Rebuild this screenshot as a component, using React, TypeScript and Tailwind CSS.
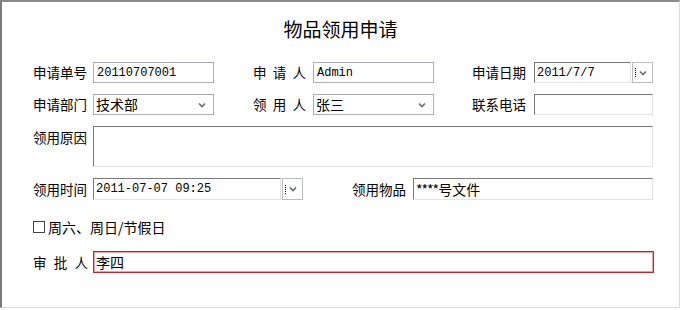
import React from "react";

const cjk = "font-['Noto_Sans_CJK_SC',sans-serif]";
const mono = "font-['Liberation_Mono','Noto_Sans_CJK_SC',monospace]";

const flat = "border border-[#a9adb3] bg-white";
const inset =
  "border border-t-[#7a7a7a] border-l-[#7a7a7a] border-r-[#e3e3e3] border-b-[#e3e3e3] bg-white";

const Chevron = () => (
  <svg width="8" height="6" viewBox="0 0 8 6" className="shrink-0">
    <polyline
      points="1,1.5 4,4.5 7,1.5"
      fill="none"
      stroke="#6b6b6b"
      strokeWidth="1.6"
    />
  </svg>
);

const Label = ({ text, spread = false, w = "w-[55px]" }: { text: string; spread?: boolean; w?: string }) => (
  <div
    className={`${w} shrink-0 whitespace-nowrap text-[13.5px] leading-[21px] text-black ${cjk} ${spread ? "flex justify-between" : ""}`}
  >
    {spread ? text.split("").map((c, i) => <span key={i}>{c}</span>) : text}
  </div>
);

const Select = ({ value, w }: { value: string; w: string }) => (
  <div className={`${w} h-[21px] ${flat} flex items-center justify-between pl-[2px] pr-[7px]`}>
    <span className={`text-[14px] leading-[19px] text-black ${cjk}`}>{value}</span>
    <Chevron />
  </div>
);

const DropButton = () => (
  <div className={`ml-[1px] w-[21px] h-full ${flat} border-[#b9bdc2] flex items-center gap-[3px] pl-[2px]`}>
    <div className="w-[1px] h-[9px] border-l border-dotted border-black" />
    <Chevron />
  </div>
);

export default function App() {
  return (
    <div className="w-[682px] h-[310px] bg-white">
      <div className="w-[680px] h-[308px] border-t-2 border-l-2 border-t-[#8a8a8a] border-l-[#7a7a7a] border-r border-b border-r-[#dadada] border-b-[#dadada] bg-white">
        <div className="h-[60px] pt-[15px] text-center">
          <span className={`text-[19px] leading-[24px] text-black ${cjk}`}>物品领用申请</span>
        </div>

        <div className="pl-[31px] flex flex-col">
          {/* row 1 */}
          <div className="flex items-center h-[21px]">
            <Label text="申请单号" />
            <div className={`ml-[5px] w-[121px] h-[21px] ${flat} pl-[3px] flex items-center`}>
              <span className={`text-[12px] text-black ${mono}`}>20110707001</span>
            </div>
            <div className="ml-[39px]">
              <Label text="申请人" spread w="w-[53px]" />
            </div>
            <div className={`ml-[7px] w-[121px] h-[21px] ${flat} pl-[3px] flex items-center`}>
              <span className={`text-[12px] text-black ${mono}`}>Admin</span>
            </div>
            <div className="ml-[38px]">
              <Label text="申请日期" />
            </div>
            <div className="ml-[7px] flex h-[21px]">
              <div className={`w-[97px] h-full ${inset} pl-[2px] flex items-center`}>
                <span className={`text-[12px] text-black ${mono}`}>2011/7/7</span>
              </div>
              <DropButton />
            </div>
          </div>

          {/* row 2 */}
          <div className="mt-[11px] flex items-center h-[21px]">
            <Label text="申请部门" />
            <div className="ml-[5px]">
              <Select value="技术部" w="w-[121px]" />
            </div>
            <div className="ml-[39px]">
              <Label text="领用人" spread w="w-[53px]" />
            </div>
            <div className="ml-[7px]">
              <Select value="张三" w="w-[121px]" />
            </div>
            <div className="ml-[38px]">
              <Label text="联系电话" />
            </div>
            <div className={`ml-[7px] w-[119px] h-[21px] ${inset}`} />
          </div>

          {/* row 3 */}
          <div className="mt-[11px] flex items-start">
            <div className="pt-[1px]">
              <Label text="领用原因" />
            </div>
            <div className={`ml-[5px] w-[560px] h-[41px] ${inset}`} />
          </div>

          {/* row 4 */}
          <div className="mt-[11px] flex items-center h-[22px]">
            <Label text="领用时间" />
            <div className="ml-[5px] flex h-[22px]">
              <div className={`w-[188px] h-full ${inset} pl-[2px] flex items-center`}>
                <span className={`text-[12px] text-black ${mono}`}>2011-07-07 09:25</span>
              </div>
              <DropButton />
            </div>
            <div className="ml-[49px]">
              <Label text="领用物品" />
            </div>
            <div className={`ml-[6px] w-[240px] h-[22px] ${inset} pl-[2px] flex items-center`}>
              <span className={`text-[14px] text-black ${cjk}`}>
                <span className="tracking-[-1px]">****</span>号文件
              </span>
            </div>
          </div>

          {/* checkbox */}
          <div className="mt-[19px] flex items-center h-[16px]">
            <div className="w-[12px] h-[12px] border border-[#444] bg-white" />
            <span className={`ml-[3px] text-[14px] leading-[16px] text-black ${cjk}`}>周六、周日/节假日</span>
          </div>

          {/* approver */}
          <div className="mt-[16px] flex items-center h-[22px]">
            <Label text="审批人" spread />
            <div className="ml-[5px] w-[561px] h-[22px] border border-[#c0262c] shadow-[inset_0_0_0_1px_#e9a3a5] bg-white pl-[2px] flex items-center">
              <span className={`text-[14px] text-black ${cjk}`}>李四</span>
            </div>
          </div>
        </div>
      </div>
    </div>
  );
}
